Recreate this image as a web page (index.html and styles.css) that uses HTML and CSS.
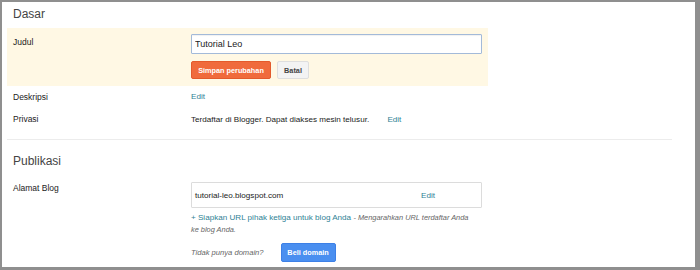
FILE: index.html
```html
<!DOCTYPE html>
<html lang="id">
<head>
<meta charset="utf-8">
<title>Setelan Dasar</title>
<link rel="stylesheet" href="styles.css">
</head>
<body>
<div class="frame">
  <section class="group">
    <h2 class="group-title">Dasar</h2>
    <div class="row row-active">
      <div class="label">Judul</div>
      <div class="value">
        <input class="text-input" type="text" value="Tutorial Leo">
        <div class="actions">
          <button class="btn btn-orange">Simpan perubahan</button>
          <button class="btn btn-gray">Batal</button>
        </div>
      </div>
    </div>
    <div class="row row-line">
      <div class="label">Deskripsi</div>
      <div class="value"><a class="link">Edit</a></div>
    </div>
    <div class="row row-line">
      <div class="label">Privasi</div>
      <div class="value">Terdaftar di Blogger. Dapat diakses mesin telusur. <a class="link link-gap">Edit</a></div>
    </div>
  </section>
  <hr class="sep">
  <section class="group">
    <h2 class="group-title title-pub">Publikasi</h2>
    <div class="row row-address">
      <div class="label">Alamat Blog</div>
      <div class="value">
        <div class="url-box">
          <span class="url">tutorial-leo.blogspot.com</span>
          <a class="link url-edit">Edit</a>
        </div>
        <p class="help"><a class="link">+ Siapkan URL pihak ketiga untuk blog Anda</a> <em>- Mengarahkan URL terdaftar Anda ke blog Anda.</em></p>
        <div class="domain">
          <em class="domain-q">Tidak punya domain?</em>
          <button class="btn btn-blue">Beli domain</button>
        </div>
      </div>
    </div>
  </section>
</div>
</body>
</html>
```

FILE: styles.css
```css
* { box-sizing: border-box; }
html, body { margin: 0; padding: 0; background: #fff; }
body {
  font-family: "Liberation Sans", Arial, sans-serif;
  font-size: 8.5px;
  color: #222;
}
.frame {
  width: 700px;
  height: 270px;
  border-style: solid;
  border-color: #8f8f8f;
  border-width: 2px 5px 3px 2px;
  padding-left: 5px;
  overflow: hidden;
}
.group { width: 665px; }
.group-title {
  margin: 0;
  height: 26px;
  line-height: 24px;
  font-size: 12px;
  font-weight: normal;
  color: #444;
  padding-left: 6px;
}
.title-pub {
  height: 42px;
  padding-top: 9px;
}
.row {
  display: grid;
  grid-template-columns: 184px 291px;
  width: 481px;
}
.label { padding-left: 6px; color: #222; }
.value { font-size: 8.1px; }
.row-active {
  background: #fff8e4;
  padding: 6px 0 7px;
}
.row-active .label { padding-top: 2px; line-height: 12px; }
.text-input {
  display: block;
  width: 291px;
  height: 20px;
  margin: 0;
  border: 1px solid #a3bad9;
  border-radius: 1px;
  padding: 0 3px;
  font-family: inherit;
  font-size: 9px;
  color: #222;
  background: #fff;
  box-shadow: inset 0 1px 1px rgba(0,0,0,0.06);
  outline: none;
}
.actions {
  display: flex;
  gap: 6px;
  margin-top: 7px;
}
.btn {
  height: 18px;
  margin: 0;
  padding: 0;
  font-family: inherit;
  font-size: 7.3px;
  font-weight: bold;
  white-space: nowrap;
  border-radius: 2px;
  border: 1px solid transparent;
  cursor: pointer;
}
.btn-orange {
  width: 80px;
  background: #f06b3c;
  border-color: #e35a2c;
  color: #fff;
}
.btn-gray {
  width: 32px;
  background: #f3f3f3;
  border-color: #dedede;
  color: #444;
}
.btn-blue {
  width: 55px;
  height: 19px;
  background: #4a8ff0;
  border-color: #3d80e6;
  color: #fff;
}
.row-line { line-height: 22px; }
.row-line + .row-line { line-height: 23px; }
.link { color: #2f8295; text-decoration: none; cursor: pointer; }
.link-gap { margin-left: 16px; }
.sep {
  margin: 8px 0 0;
  width: 665px;
  border: 0;
  border-top: 1px solid #ececec;
  height: 0;
}
.row-address .label { line-height: 12px; }
.url-box {
  display: flex;
  align-items: center;
  height: 26px;
  border: 1px solid #dcdcdc;
  border-radius: 1px;
}
.url { flex: 1; padding-left: 3px; color: #222; }
.url-edit { width: 106px; text-align: center; }
.help {
  margin: 4px 0 0;
  line-height: 12px;
  color: #666;
  width: 285px;
}
.help em { font-style: italic; color: #666; font-size: 7.4px; }
.domain {
  display: flex;
  align-items: center;
  gap: 17px;
  margin-top: 7px;
}
.domain-q { color: #666; font-style: italic; font-size: 7.6px; }
```
